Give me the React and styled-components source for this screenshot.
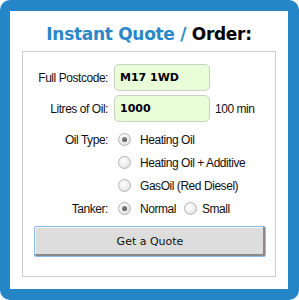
import React from 'react';
import styled, { createGlobalStyle } from 'styled-components';

const GlobalStyle = createGlobalStyle`
  html, body { margin: 0; padding: 0; background: #ffffff; }
  body { font-family: "Liberation Sans", Arial, sans-serif; }
`;

const Frame = styled.div`
  box-sizing: border-box;
  width: 299px;
  height: 300px;
  border: 11px solid #2485c7;
  border-left-width: 10px;
  border-radius: 10px;
  background: #ffffff;
  padding: 0 12px;
`;

const Title = styled.h2`
  margin: 0;
  height: 40px;
  box-sizing: border-box;
  padding-top: 13px;
  text-align: center;
  font-family: "DejaVu Sans", Verdana, sans-serif;
  font-weight: bold;
  font-size: 17px;
  line-height: 20px;
  letter-spacing: -0.3px;
  color: #2a87c8;
  span { color: #000000; }
`;

const Box = styled.div`
  box-sizing: border-box;
  border: 1px solid #cccccc;
  height: 226px;
  padding: 12px 10px 0 0;
`;

const Form = styled.div`
  display: grid;
  grid-template-columns: 85px 1fr;
  column-gap: 6px;
`;

const Label = styled.div`
  display: flex;
  align-items: center;
  justify-content: flex-end;
  height: ${p => p.h}px;
  margin-top: ${p => p.mt || 0}px;
  font-size: 12px;
  letter-spacing: -0.45px;
  color: #111111;
`;

const Field = styled.div`
  display: flex;
  align-items: center;
  height: ${p => p.h}px;
  margin-top: ${p => p.mt || 0}px;
  font-size: 12px;
  letter-spacing: -0.45px;
  color: #111111;
`;

const Input = styled.div`
  box-sizing: border-box;
  width: 96px;
  height: 27px;
  border: 1px solid #c9d2c2;
  border-radius: 5px;
  background: #e9fdd9;
  padding-left: 5px;
  display: flex;
  align-items: center;
  font-family: "DejaVu Sans", Verdana, sans-serif;
  font-weight: bold;
  font-size: 11px;
  letter-spacing: 0;
  color: #000000;
`;

const Note = styled.span`
  margin-left: 5px;
`;

const Option = styled.label`
  display: flex;
  align-items: center;
  margin-right: 4px;
`;

const Radio = styled.span`
  box-sizing: border-box;
  width: 13px;
  height: 13px;
  border-radius: 50%;
  border: 1px solid #b4b4b4;
  background: radial-gradient(circle at 40% 35%, #ffffff 0%, #f0f0f0 45%, #d6d6d6 100%);
  margin: 0 ${p => (p.tight ? 5 : 9)}px 0 4px;
  display: flex;
  align-items: center;
  justify-content: center;
  &::after {
    content: "";
    display: ${p => (p.checked ? 'block' : 'none')};
    width: 5px;
    height: 5px;
    border-radius: 50%;
    background: radial-gradient(circle at 40% 35%, #8a8a8a, #444444);
  }
`;

const Button = styled.button`
  display: block;
  box-sizing: border-box;
  width: 232px;
  height: 31px;
  margin: 6px 0 0 11px;
  border: 1px solid #8fb8ee;
  border-radius: 2px;
  background: #dddddd;
  box-shadow: inset -2px -2px 0 #8a8a8a, inset 1px 1px 0 #f4f4f4;
  font-family: "DejaVu Sans", Verdana, sans-serif;
  font-size: 11px;
  color: #111111;
  padding: 0;
`;

export default function App() {
  return (
    <>
      <GlobalStyle />
      <Frame>
        <Title>Instant Quote / <span>Order:</span></Title>
        <Box>
          <Form>
            <Label h={27}>Full Postcode:</Label>
            <Field h={27}><Input>M17 1WD</Input></Field>

            <Label h={27} mt={4}>Litres of Oil:</Label>
            <Field h={27} mt={4}><Input>1000</Input><Note>100 min</Note></Field>

            <Label h={23} mt={6}>Oil Type:</Label>
            <Field h={23} mt={6}><Option><Radio checked />Heating Oil</Option></Field>

            <Label h={23} />
            <Field h={23}><Option><Radio />Heating Oil + Additive</Option></Field>

            <Label h={23} />
            <Field h={23}><Option><Radio />GasOil (Red Diesel)</Option></Field>

            <Label h={23}>Tanker:</Label>
            <Field h={23}>
              <Option><Radio checked />Normal</Option>
              <Option><Radio tight />Small</Option>
            </Field>
          </Form>
          <Button>Get a Quote</Button>
        </Box>
      </Frame>
    </>
  );
}
